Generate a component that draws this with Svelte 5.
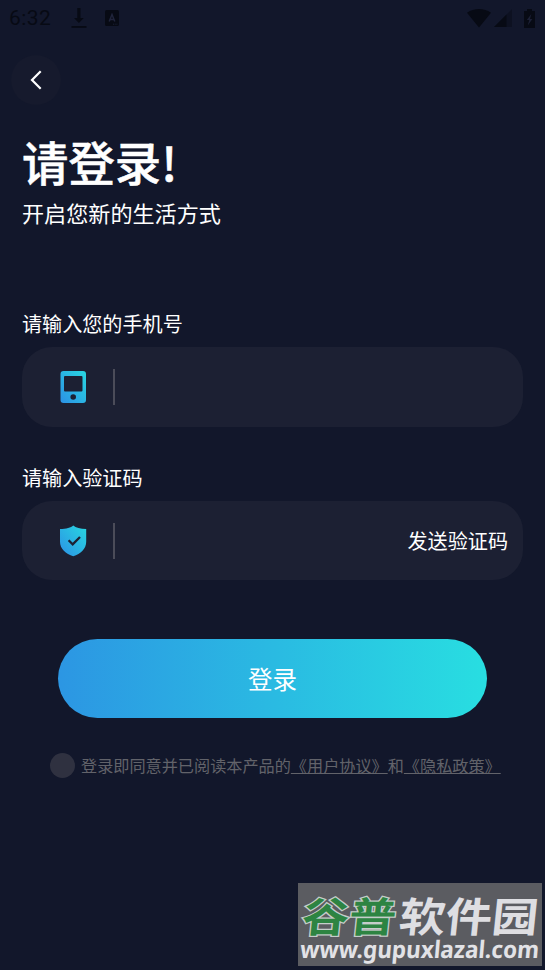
<script lang="ts">
    let phone = '';
    let code = '';
    let agreed = false;

    function toggleAgreed() {
        agreed = !agreed;
    }
</script>

<main class="screen">
    <header class="status-bar">
        <span class="clock">6:32</span>
        <svg class="download" width="16" height="20" viewBox="0 0 16 20">
            <path d="M6.300 0h3.200v10h3.300L7.900 15 3 10h3.300z" />
            <path d="M.5 18h15v1.800H.5z" />
        </svg>
        <svg class="keyboard" width="15" height="16" viewBox="0 0 15 16">
            <rect width="14" height="16" rx="1.600" />
            <path d="M4.200 11.500 7 4.500l2.800 7M5.100 9.400h3.800" fill="none" stroke="#20243b" stroke-width="1.500" />
            <path d="M8 14.200h5" stroke="#20243b" stroke-width=".8" stroke-dasharray="1 .7" />
        </svg>
        <div class="system">
            <svg width="24" height="19" viewBox="0 0 24 19">
                <path d="M0 3.800C7-1.200 17-1.200 24 3.800L12 18.500z" />
            </svg>
            <svg width="18" height="18" viewBox="0 0 18 18">
                <path d="M18 0v18H0z" opacity=".4" />
                <path d="M12.500 5.500V18H0z" />
            </svg>
            <svg class="battery" width="11" height="19" viewBox="0 0 11 19">
                <path d="M3 0h5v2h3v17H0V2h3z" />
                <path d="M7.300 5 2.800 11h2.500l-1.600 5.500L8.400 10H6z" fill="#1c2035" />
            </svg>
        </div>
    </header>

    <button class="back" aria-label="返回">
        <svg width="12" height="20" viewBox="0 0 12 20">
            <path d="M10.700 1.200 2 10l8.700 8.800" fill="none" stroke="#fff" stroke-width="2.200" />
        </svg>
    </button>

    <h1>请登录!</h1>
    <p class="subtitle">开启您新的生活方式</p>

    <form on:submit|preventDefault>
        <label for="phone">请输入您的手机号</label>
        <div class="field">
            <svg class="field-icon" width="28" height="32" viewBox="0 0 28 32">
                <defs>
                    <linearGradient id="blue" x1="0" y1="1" x2="1" y2="0">
                        <stop offset="0" stop-color="#2c91e5" />
                        <stop offset="1" stop-color="#28d7e1" />
                    </linearGradient>
                </defs>
                <path
                    fill="url(#blue)"
                    fill-rule="evenodd"
                    d="M3.500 0h19.500A3 3 0 0 1 26 3v26a3 3 0 0 1-3 3h-19.500a3 3 0 0 1-3-3V3a3 3 0 0 1 3-3zM5 5a1 1 0 0 0-1 1v13.500a1 1 0 0 0 1 1h16.500a1 1 0 0 0 1-1V6a1 1 0 0 0-1-1zM13.200 23.200a2.800 2.800 0 1 0 0 5.600 2.800 2.800 0 0 0 0-5.600z"
                />
            </svg>
            <span class="divider"></span>
            <input id="phone" type="tel" bind:value={phone} />
        </div>

        <label for="code">请输入验证码</label>
        <div class="field code-field">
            <svg class="field-icon" width="28" height="32" viewBox="0 0 28 32">
                <path
                    fill="url(#blue)"
                    d="M13.300.500c2.400 2.100 7 3.500 12.900 3.500v12.700c0 7-5.500 12.100-12.900 14.600C5.800 28.800 0 23.700 0 16.700V4C6.300 4 10.900 2.600 13.300.500z"
                />
                <path d="m8.600 15.300 4.100 4 7.300-7.300" fill="none" stroke="#1c2033" stroke-width="2.300" />
            </svg>
            <span class="divider"></span>
            <input id="code" type="text" bind:value={code} />
            <button class="send" type="button">发送验证码</button>
        </div>

        <button class="login" type="submit">登录</button>
    </form>

    <div class="agreement">
        <button class="check" class:checked={agreed} aria-label="同意" on:click={toggleAgreed}></button>
        <span>登录即同意并已阅读本产品的<u>《用户协议》</u>和<u>《隐私政策》</u></span>
    </div>

    <svg class="watermark" width="244" height="83" viewBox="0 0 244 83">
        <rect width="244" height="83" fill="#5b5c61" />
        <g class="mark-name" transform="skewX(-6)">
            <text class="green" x="8" y="49" textLength="94" lengthAdjust="spacingAndGlyphs">谷普</text>
            <text x="105" y="49" textLength="139" lengthAdjust="spacingAndGlyphs">软件园</text>
        </g>
        <g transform="skewX(-5)">
            <text class="mark-url" x="8" y="75" textLength="239" lengthAdjust="spacingAndGlyphs">www.gupuxlazal.com</text>
        </g>
    </svg>
</main>

<style>
    :global(body) {
        background: #12172b;
    }

    .screen {
        position: relative;
        box-sizing: border-box;
        height: 970px;
        padding: 0 22px;
        overflow: hidden;
        background: #12172b;
        color: #fff;
        font-family: "Noto Sans CJK SC", sans-serif;
    }

    button {
        padding: 0;
        border: 0;
        color: inherit;
        font-family: inherit;
        cursor: pointer;
    }

    svg {
        display: block;
        flex: none;
    }

    .status-bar {
        display: flex;
        align-items: center;
        height: 36px;
        margin: 0 -13px;
        color: #070a14;
        fill: #070a14;
    }

    .clock {
        width: 62px;
        font: 21px/36px Roboto, sans-serif;
        letter-spacing: 0.4px;
    }

    .download {
        margin-right: 18px;
    }

    .system {
        display: flex;
        align-items: center;
        margin: 0 1px 0 auto;
        gap: 3px;
    }

    .battery {
        margin-left: 9px;
    }

    .back {
        display: flex;
        align-items: center;
        justify-content: center;
        width: 50px;
        height: 50px;
        margin: 19px 0 0 -11px;
        border-radius: 50%;
        background: #161a2d;
    }

    h1 {
        margin: 22px 0 0;
        font-size: 46.4px;
        font-weight: 500;
        line-height: 68px;
        -webkit-text-stroke: 0.5px #fff;
    }

    .subtitle {
        margin: 1px 0 0;
        font-size: 22.1px;
        line-height: 32px;
    }

    form {
        display: flex;
        flex-direction: column;
        margin-top: 81px;
    }

    label {
        font-size: 20.1px;
        line-height: 30px;
    }

    .field {
        display: flex;
        align-items: center;
        box-sizing: border-box;
        height: 80px;
        margin: 8px 0 36px;
        padding: 0 15px 0 38px;
        border-radius: 30px;
        background: #1c2033;
    }

    .code-field {
        height: 79px;
    }

    .divider {
        flex: none;
        width: 2px;
        height: 36px;
        margin-left: 25px;
        background: #4b4c59;
    }

    input {
        flex: 1;
        min-width: 0;
        padding: 0 12px;
        border: 0;
        outline: 0;
        background: none;
        color: #fff;
        font-size: 20px;
    }

    .send {
        background: none;
        font-size: 20.1px;
    }

    .login {
        height: 79px;
        margin: 23px 36px 0;
        border-radius: 40px;
        background: linear-gradient(90deg, #2c96e3, #28dee1);
        font-size: 24.5px;
    }

    .agreement {
        display: flex;
        align-items: center;
        margin: 35px 0 0 28px;
        gap: 6px;
        color: #62636a;
        font-size: 16.15px;
        line-height: 25px;
        white-space: nowrap;
    }

    .check {
        flex: none;
        width: 25px;
        height: 25px;
        border-radius: 50%;
        background: #2f3140;
    }

    .check.checked {
        background: #28b7e1;
    }

    .watermark {
        position: absolute;
        left: 298px;
        top: 883px;
    }

    .mark-name {
        fill: #dedee2;
        font-size: 41px;
        font-weight: 700;
    }

    .green {
        fill: #2d8442;
        stroke: #c5cdca;
        stroke-width: 2.5;
        paint-order: stroke;
    }

    .mark-url {
        fill: #e2e2e6;
        font: 700 24px "Noto Sans", sans-serif;
    }
</style>
